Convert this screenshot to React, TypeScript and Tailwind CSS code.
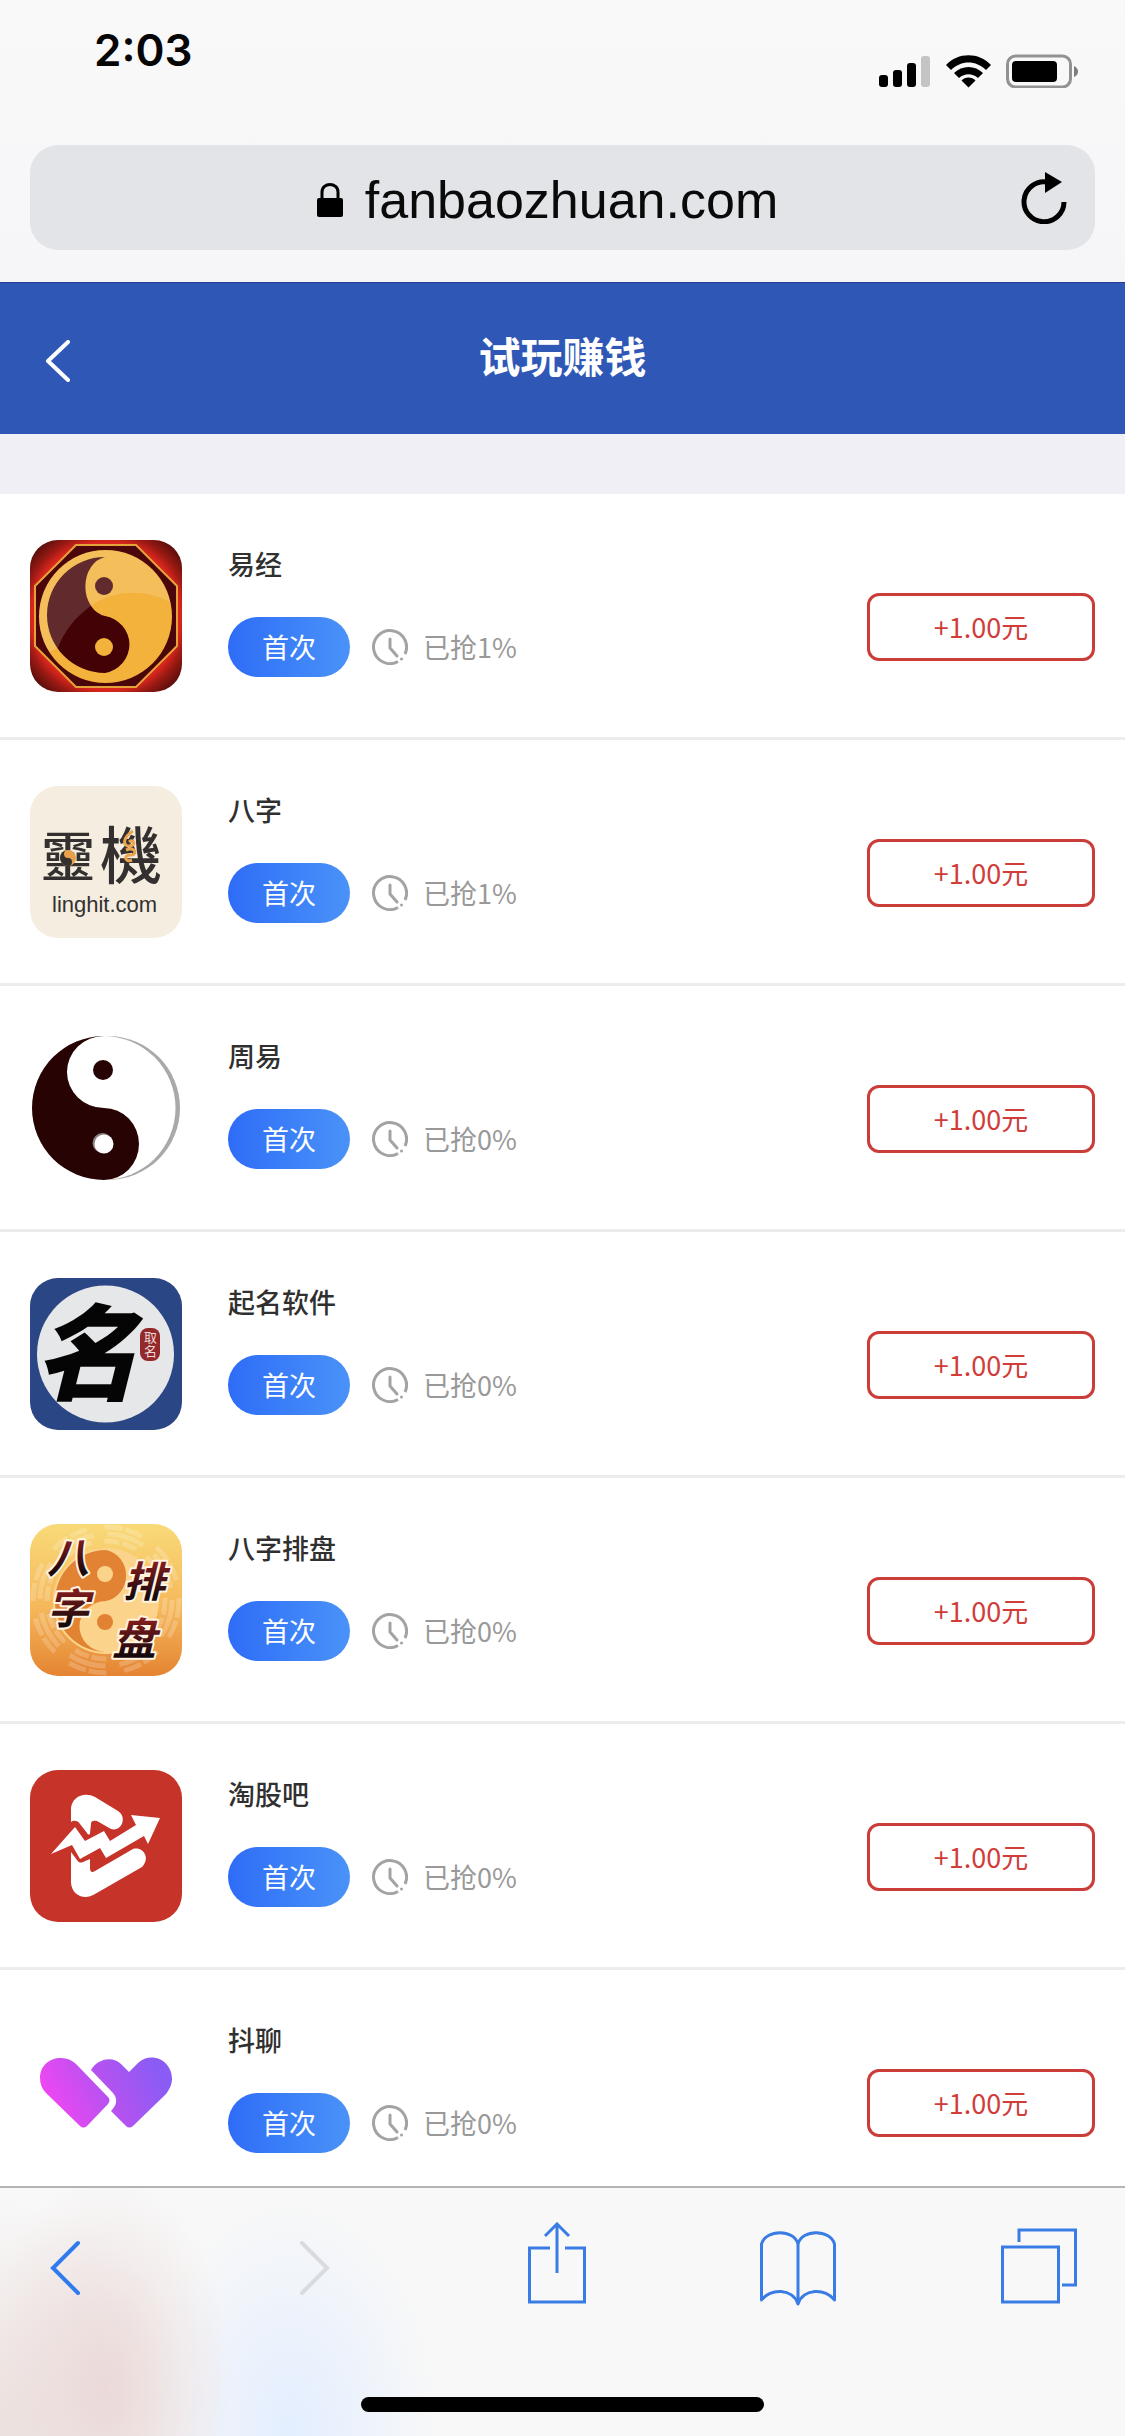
import React from 'react';

const cjk = "font-['Noto_Sans_CJK_SC',sans-serif]";
const iconFont = '"Noto Sans CJK SC", sans-serif';

function YiJingIcon() {
  return (
    <svg viewBox="0 0 152 152" className="size-full" aria-hidden="true">
      <defs>
        <radialGradient id="yj-bg" cx="50%" cy="50%" r="70%">
          <stop offset="0.7" stopColor="#d8261c" />
          <stop offset="0.78" stopColor="#9c1a14" />
          <stop offset="1" stopColor="#240404" />
        </radialGradient>
        <clipPath id="yj-disk">
          <circle cx="75.5" cy="76.5" r="66.5" />
        </clipPath>
      </defs>
      <rect width="152" height="152" fill="url(#yj-bg)" />
      <path d="M46 5H106L147 46V106L106 147H46L5 106V46Z" fill="#4a0608" stroke="#e6a23a" strokeWidth="2" />
      <circle cx="75.5" cy="76.5" r="66.5" fill="#f2b23c" />
      <path d="M75 17A58 58 0 0 0 75 133A30 29 0 0 0 75 76A24 30 0 0 1 75 17Z" fill="#430205" />
      <circle cx="74" cy="46" r="9" fill="#430205" />
      <circle cx="74" cy="107" r="9" fill="#f2b23c" />
      <path d="M0 0H152V70C120 46 85 50 62 65C44 78 34 92 28 108L0 120Z" fill="#fff" fillOpacity="0.16" clipPath="url(#yj-disk)" />
    </svg>
  );
}

function LinghitIcon() {
  return (
    <svg viewBox="0 0 152 152" className="size-full" aria-hidden="true">
      <rect width="152" height="152" fill="#f4ede0" />
      <text x="11" y="91" fontSize="54" fontWeight="500" fill="#33302f" fontFamily='"Noto Sans CJK TC", sans-serif'>靈</text>
      <text x="70" y="93" fontSize="62" fontWeight="500" fill="#33302f" fontFamily='"Noto Sans CJK TC", sans-serif'>機</text>
      <circle cx="38" cy="72" r="8" fill="#e9a04b" />
      <path d="M38 64A8 8 0 0 0 38 80A4 4 0 0 0 38 72A4 4 0 0 1 38 64Z" fill="#33302f" />
      <path d="M103 45C92 52 93 60 99 60C107 60 104 52 99 56M96 64C107 60 107 70 100 69C93 69 95 77 102 74" fill="none" stroke="#eba54f" strokeWidth="3" />
      <text x="22" y="126" fontSize="22" fill="#33302f" fontFamily='"Liberation Sans", Arial, sans-serif'>linghit.com</text>
    </svg>
  );
}

function ZhouYiIcon() {
  return (
    <svg viewBox="0 0 152 152" className="size-full" aria-hidden="true">
      <circle cx="78" cy="76" r="72" fill="#a9a9a9" />
      <circle cx="73.5" cy="76" r="72" fill="#fff" />
      <path d="M74 4A72 72 0 0 0 74 148A35 36 0 0 0 74 76A37 36 0 0 1 74 4Z" fill="#270304" />
      <circle cx="73" cy="38" r="10" fill="#270304" />
      <circle cx="72.5" cy="111" r="10" fill="#8d8080" />
      <circle cx="74" cy="112" r="9.5" fill="#fff" />
    </svg>
  );
}

function NamingIcon() {
  return (
    <svg viewBox="0 0 152 152" className="size-full" aria-hidden="true">
      <rect width="152" height="152" fill="#2b4684" />
      <circle cx="75.5" cy="76" r="68.5" fill="#e6e7e9" />
      <text x="5" y="114" fontSize="104" fontWeight="900" fontStyle="italic" fill="#050505" fontFamily={iconFont}>名</text>
      <rect x="110" y="50" width="20" height="33" rx="8" fill="#94292b" />
      <text x="114" y="64" fontSize="13" fill="#ecd9d9" fontFamily={iconFont}>取</text>
      <text x="114" y="78" fontSize="13" fill="#ecd9d9" fontFamily={iconFont}>名</text>
    </svg>
  );
}

function PaiPanIcon() {
  const glyphs = [
    { ch: '八', x: 17, y: 49, size: 42 },
    { ch: '字', x: 17, y: 100, size: 42 },
    { ch: '排', x: 93, y: 73, size: 42 },
    { ch: '盘', x: 82, y: 131, size: 44 },
  ];
  return (
    <svg viewBox="0 0 152 152" className="size-full" aria-hidden="true">
      <defs>
        <linearGradient id="pp-bg" x1="0" y1="0" x2="0" y2="1">
          <stop offset="0" stopColor="#f9da78" />
          <stop offset="0.55" stopColor="#f5b85b" />
          <stop offset="1" stopColor="#e58432" />
        </linearGradient>
        <linearGradient id="pp-ink" x1="0" y1="0" x2="0" y2="1">
          <stop offset="0.2" stopColor="#8a1d1e" />
          <stop offset="0.8" stopColor="#17090c" />
        </linearGradient>
      </defs>
      <rect width="152" height="152" fill="url(#pp-bg)" />
      <g fill="none" stroke="#fff" strokeOpacity="0.2" strokeWidth="5">
        <circle cx="76" cy="76" r="59" strokeDasharray="15 3 15 13" />
        <circle cx="76" cy="76" r="66" strokeDasharray="38 14" />
        <circle cx="76" cy="76" r="73" strokeDasharray="18 3 18 18" />
      </g>
      <circle cx="76" cy="77" r="53" fill="#fbd38b" />
      <path d="M76 26A51 51 0 0 0 76 128A26 25 0 0 1 76 77A25 26 0 0 0 76 26Z" fill="#e28334" />
      <circle cx="75" cy="50" r="8" fill="#fbd38b" />
      <circle cx="75" cy="98" r="8" fill="#e28334" />
      {glyphs.map((g) => (
        <text
          key={g.ch}
          x={g.x}
          y={g.y}
          fontSize={g.size}
          fontWeight="700"
          fontStyle="italic"
          fill="url(#pp-ink)"
          stroke="#fff4e2"
          strokeWidth="4"
          strokeLinejoin="round"
          paintOrder="stroke"
          fontFamily={iconFont}
        >
          {g.ch}
        </text>
      ))}
    </svg>
  );
}

function TaoGuIcon() {
  return (
    <svg viewBox="0 0 152 152" className="size-full" aria-hidden="true">
      <rect width="152" height="152" fill="#c63329" />
      <g fill="#fff">
        <path d="M41 52V38C42 27 54 21 65 27L88 41C98 48 91 62 81 59L67 51C63 50 61 51 61 54L60 63C60 65 58 65 57 63L50 54C48 50 43 50 41 52Z" />
        <path d="M21 84L45 57L55 71L74 61L80 71L106 55L101 45L130 48L118 74L114 66L76 88L70 78L50 89L42 75Z" />
        <path d="M41 82L47 90C49 93 51 93 53 92L60 89V98C60 102 62 103 65 101L103 79C113 76 121 88 112 97L65 124C54 131 42 125 41 113Z" />
      </g>
    </svg>
  );
}

function DouLiaoIcon() {
  return (
    <svg viewBox="0 0 152 152" className="size-full" aria-hidden="true">
      <defs>
        <linearGradient id="dl" gradientUnits="userSpaceOnUse" x1="28" y1="98" x2="126" y2="50">
          <stop offset="0" stopColor="#ea48f2" />
          <stop offset="0.5" stopColor="#b552f0" />
          <stop offset="1" stopColor="#8a5cf5" />
        </linearGradient>
      </defs>
      <g fill="url(#dl)">
        <path d="M10 62C10 50 19 42 31 42C37 42 42 44 46 48L78 81Q81 84 78 88L57 110Q53 113 50 110L16 77C12 73 10 68 10 62Z" />
        <path d="M61 54C69 41 84 41 91 48L99 56L108 47C121 35 142 44 142 63C142 69 139 74 136 78L103 110Q99 113 96 110L81 95C87 89 88 83 83 77Z" />
      </g>
    </svg>
  );
}

type Task = { name: string; taken: number; Icon: () => React.ReactElement };

const tasks: Task[] = [
  { name: '易经', taken: 1, Icon: YiJingIcon },
  { name: '八字', taken: 1, Icon: LinghitIcon },
  { name: '周易', taken: 0, Icon: ZhouYiIcon },
  { name: '起名软件', taken: 0, Icon: NamingIcon },
  { name: '八字排盘', taken: 0, Icon: PaiPanIcon },
  { name: '淘股吧', taken: 0, Icon: TaoGuIcon },
  { name: '抖聊', taken: 0, Icon: DouLiaoIcon },
];

function Clock() {
  return (
    <svg viewBox="0 0 36 36" className="size-9" fill="none" stroke="#a3a3a3" strokeWidth="3" aria-hidden="true">
      <path d="M33 25A16.500 16.500 0 1 0 26 32.500" />
      <path d="M18 10V19L25 27" strokeLinecap="round" strokeLinejoin="round" />
      <circle cx="29.500" cy="30" r="1.500" fill="#a3a3a3" stroke="none" />
    </svg>
  );
}

function TaskRow({ name, taken, Icon }: Task) {
  return (
    <li className="flex border-b-[3px] border-[#ececec] px-[30px] pt-[46px] pb-[45px]">
      <div className="size-[152px] shrink-0 overflow-hidden rounded-[28px]">
        <Icon />
      </div>
      <div className="ml-[46px] flex-1 pt-[6px]">
        <h2 className="text-[27px] leading-9 font-medium text-[#303030]">{name}</h2>
        <div className="mt-[35px] flex items-center">
          <span className="rounded-full bg-linear-to-r from-[#2f6cf7] to-[#4a92f8] px-[34px] text-[27px] leading-[60px] text-white">首次</span>
          <span className="ml-[22px]">
            <Clock />
          </span>
          <span className="ml-[15px] text-[27px] leading-9 text-[#999]">已抢{taken}%</span>
        </div>
      </div>
      <button type="button" className="mb-[31px] h-[68px] w-[228px] self-end rounded-xl border-[3px] border-[#cb3d39] text-[27px] leading-9 text-[#d03d3a]">
        +1.00元
      </button>
    </li>
  );
}

function StatusBar() {
  return (
    <div className="flex items-start justify-between pr-[46px] pl-[94px]">
      <time className="pt-[22px] font-['Inter',sans-serif] text-[44px] leading-[56px] font-semibold text-[#060606]">2:03</time>
      <div className="flex items-center gap-[15px] pt-[54px]">
        <svg viewBox="0 0 52 34" className="h-[34px] w-[52px]" role="img" aria-label="signal">
          <rect x="0" y="21" width="9" height="12" rx="3" />
          <rect x="14" y="16" width="9" height="17" rx="3" />
          <rect x="28" y="9" width="9" height="24" rx="3" />
          <rect x="42" y="2" width="9" height="31" rx="3" fill="#c4c4c4" />
        </svg>
        <svg viewBox="0 0 45 34" className="h-[34px] w-[45px]" role="img" aria-label="wifi">
          <path d="M0 11C12-2 33-2 45 11L40 16C30 6 15 6 5 16Z" />
          <path d="M8 19C16 11 29 11 37 19L32 24C26 19 19 19 13 24Z" />
          <path d="M15.500 26.500C19 22.500 26 22.500 29.500 26.500L22.500 33.500Z" />
        </svg>
        <svg viewBox="0 0 73 34" className="h-[34px] w-[73px]" role="img" aria-label="battery">
          <rect x="1.500" y="2" width="63" height="31" rx="8" fill="none" stroke="#929292" strokeWidth="3" />
          <rect x="6" y="7" width="45" height="21" rx="4" />
          <path d="M68 12Q72 14 72 17.500Q72 21 68 23Z" fill="#7d7d7d" />
        </svg>
      </div>
    </div>
  );
}

function AddressBar() {
  return (
    <div className="mx-[30px] mt-[57px] flex h-[105px] items-center rounded-[28px] bg-[#e3e4e8] pr-7 pl-[72px]">
      <label className="flex flex-1 items-center justify-center gap-[22px] pt-1 pr-7">
        <svg viewBox="0 0 26 34" className="h-[34px] w-[26px]" aria-hidden="true">
          <rect x="0" y="15" width="26" height="19" rx="2" />
          <path d="M5 16V9C5-1 21-1 21 9V16" fill="none" stroke="#000" strokeWidth="3" />
        </svg>
        <input
          type="text"
          aria-label="address"
          defaultValue="fanbaozhuan.com"
          className="field-sizing-content bg-transparent font-['Liberation_Sans',Arial,sans-serif] text-[52px] leading-[60px] text-[#0a0a0a] outline-none"
        />
      </label>
      <button type="button" aria-label="reload">
        <svg viewBox="0 0 46 52" className="h-[52px] w-[46px]" aria-hidden="true">
          <path d="M26 10A20 20 0 1 0 43 30" fill="none" stroke="#000" strokeWidth="5" />
          <path d="M24 0L41 10L24 21Z" />
        </svg>
      </button>
    </div>
  );
}

function Toolbar() {
  return (
    <footer className="border-t-2 border-[#b4b4b4] bg-[#f8f8f8] bg-[radial-gradient(ellipse_130px_210px_at_105px_200px,#ead9d8_0%,#ead9d899_40%,#f8f8f800_100%),radial-gradient(ellipse_150px_230px_at_290px_240px,#e3eeff_0%,#e3eeff88_45%,#f8f8f800_100%),radial-gradient(ellipse_190px_230px_at_0px_240px,#ece2df_0%,#f8f8f800_100%)] pb-6">
      <nav className="flex items-center justify-between px-12 pt-[34px] text-[#3a7ce6]">
        <button type="button" aria-label="back" className="w-16 text-[#2f7bee]">
          <svg viewBox="0 0 36 84" className="h-[84px] w-9" fill="none" stroke="currentColor" strokeWidth="4" strokeLinecap="round" aria-hidden="true">
            <path d="M30 21L5 46L30 71" />
          </svg>
        </button>
        <button type="button" aria-label="forward" disabled className="flex w-[76px] justify-center text-[#d9dbde]">
          <svg viewBox="0 0 36 84" className="h-[84px] w-9" fill="none" stroke="currentColor" strokeWidth="4" strokeLinecap="round" aria-hidden="true">
            <path d="M5 21L30 46L5 71" />
          </svg>
        </button>
        <button type="button" aria-label="share" className="flex w-[76px] justify-center">
          <svg viewBox="0 0 58 84" className="h-[84px] w-[58px]" fill="none" stroke="currentColor" strokeWidth="3" aria-hidden="true">
            <path d="M22 26H1.500V80H56.500V26H37M29 2V51M17 14L29 2L41 14" />
          </svg>
        </button>
        <button type="button" aria-label="bookmarks">
          <svg viewBox="0 0 76 84" className="h-[84px] w-[76px]" fill="none" stroke="currentColor" strokeWidth="3" aria-hidden="true">
            <path d="M38 82V22C34 7 6 7 1.500 22V78C10 66 33 66 38 82C43 66 66 66 74.500 78V22C70 7 42 7 38 22" strokeLinejoin="round" />
          </svg>
        </button>
        <button type="button" aria-label="tabs">
          <svg viewBox="0 0 76 84" className="h-[84px] w-[76px]" fill="none" stroke="currentColor" strokeWidth="3" aria-hidden="true">
            <rect x="1.500" y="25" width="56" height="55" />
            <path d="M18 20V8H74.500V63H61" />
          </svg>
        </button>
      </nav>
      <div className="mx-auto mt-[91px] h-[15px] w-[403px] rounded-full bg-black" />
    </footer>
  );
}

export default function App() {
  return (
    <div className={`flex h-dvh flex-col overflow-hidden bg-white ${cjk}`}>
      <header className="bg-linear-to-b from-[#f9f9f9] to-[#f6f6f9] pb-8">
        <StatusBar />
        <AddressBar />
      </header>
      <div className="grid h-[152px] shrink-0 grid-cols-[1fr_auto_1fr] items-center border-t border-[#2b3b91] bg-[#2f58b6] px-[45px] pb-2 text-white">
        <button type="button" aria-label="返回" className="mt-3 justify-self-start">
          <svg viewBox="0 0 25 42" className="h-[42px] w-[25px]" fill="none" stroke="currentColor" strokeWidth="4" strokeLinecap="round" strokeLinejoin="round" aria-hidden="true">
            <path d="M23 2L3 21L23 40" />
          </svg>
        </button>
        <h1 className="text-[42px] leading-[60px] font-bold">试玩赚钱</h1>
      </div>
      <main className="min-h-0 flex-1 overflow-y-auto bg-[#efeff5] pt-[60px] [scrollbar-width:none]">
        <ul className="bg-white">
          {tasks.map((t) => (
            <TaskRow key={t.name} {...t} />
          ))}
        </ul>
      </main>
      <Toolbar />
    </div>
  );
}
